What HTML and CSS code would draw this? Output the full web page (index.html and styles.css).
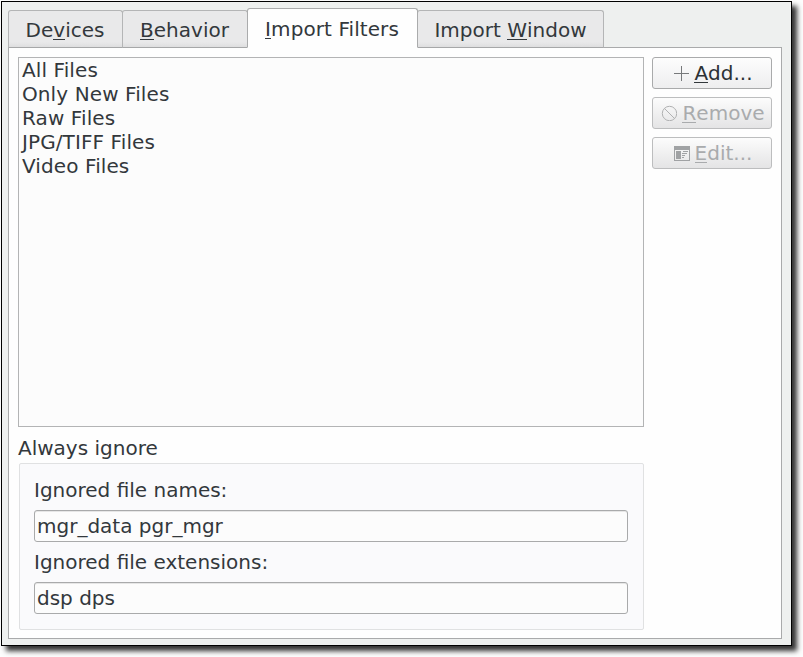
FILE: index.html
```html
<!DOCTYPE html>
<html lang="en">
<head>
<meta charset="utf-8">
<title>Import Filters</title>
<link rel="stylesheet" href="styles.css">
</head>
<body>
<main class="window">
  <nav class="tabs">
    <div class="tab tab-devices"><span>De<u>v</u>ices</span></div>
    <div class="tab tab-behavior"><span><u>B</u>ehavior</span></div>
    <div class="tab tab-active"><span><u>I</u>mport Filters</span></div>
    <div class="tab tab-window"><span>Import <u>W</u>indow</span></div>
  </nav>
  <section class="panel">
    <div class="main">
      <ul class="list">
        <li>All Files</li>
        <li>Only New Files</li>
        <li>Raw Files</li>
        <li>JPG/TIFF Files</li>
        <li>Video Files</li>
      </ul>
      <h2 class="title">Always ignore</h2>
      <div class="group">
        <label for="names">Ignored file names:</label>
        <input id="names" type="text" value="mgr_data pgr_mgr">
        <label for="extensions">Ignored file extensions:</label>
        <input id="extensions" type="text" value="dsp dps">
      </div>
    </div>
    <div class="actions">
      <button class="button">
        <svg width="16" height="16" viewBox="0 0 16 16"><path d="M8.500 1v15M1 8.500h15" fill="none" stroke="#77797b" stroke-width="1"/></svg>
        <span><u>A</u>dd...</span>
      </button>
      <button class="button" disabled>
        <svg width="16" height="16" viewBox="0 0 16 16"><g fill="none" stroke="#b0b1b2" stroke-width="1"><circle cx="8.500" cy="8.500" r="7.200"/><path d="M3.400 3.400l10.200 10.200"/></g></svg>
        <span><u>R</u>emove</span>
      </button>
      <button class="button" disabled>
        <svg width="16" height="16" viewBox="0 0 16 16"><g fill="#a0a2a4"><path fill-rule="evenodd" d="M0 1h16v15H0zM1 5v10h14V5z"/><path d="M2 6h5v8H2zM9 6h5v1H9zM8 8h5v1H8zM8 10h3v1H8zM8 12h2v1H8z"/></g></svg>
        <span><u>E</u>dit...</span>
      </button>
    </div>
  </section>
</main>
</body>
</html>
```

FILE: styles.css
```css
* { box-sizing: border-box; }

body {
  margin: 0;
  padding: 1px;
  height: 657px;
  overflow: hidden;
  background: #fdfdfd;
  color: #33383c;
  font: 20px/24px "DejaVu Sans", sans-serif;
}

u {
  text-decoration: none;
  box-shadow: 0 -1px 0 #33383c inset;
  display: inline-block;
  height: 22px;
  line-height: 24px;
  vertical-align: top;
}

.window {
  width: 791px;
  height: 645px;
  border: 1px solid #000;
  padding: 6px 9px 6px 6px;
  background: #eef0ef;
  box-shadow: 5px 5px 5px rgba(0, 0, 0, 0.8);
}

.tabs {
  display: flex;
  align-items: flex-end;
  height: 40px;
}

.tab {
  display: flex;
  justify-content: center;
  height: 38px;
  padding: 7px 1px 0 0;
  border: 1px solid #b4b5b6;
  border-bottom-color: #a6a7a8;
  border-radius: 3px 3px 0 0;
  background: linear-gradient(#e9e9ea 86%, #dededf);
}

.tab-devices { width: 115px; }
.tab-behavior { width: 126px; margin-left: -1px; }
.tab-window { width: 187px; margin-left: -1px; padding-right: 0; }

.tab-active {
  width: 171px;
  height: 40px;
  margin-left: -1px;
  padding-top: 8px;
  position: relative;
  border-color: #aaabac;
  border-bottom-color: #fefefe;
  background: #fefefe;
  letter-spacing: 0.08px;
}

.panel {
  display: flex;
  gap: 8px;
  width: 774px;
  height: 592px;
  margin-top: -1px;
  padding: 9px;
  border: 1px solid #a9aaab;
  background: #fefefe;
}

.main { width: 626px; }

.list {
  height: 370px;
  margin: 0;
  padding: 0 3px;
  border: 1px solid #b3b4b5;
  background: #fcfcfc;
  list-style: none;
  letter-spacing: 0.1px;
}

.title {
  margin: 9px 0 3px;
  font: inherit;
}

.group {
  display: flex;
  flex-direction: column;
  height: 167px;
  margin-left: 1px;
  padding: 14px 15px 14px 14px;
  border: 1px solid #e0e1e2;
  border-radius: 2px;
  background: #fafafc;
}

.group label {
  flex: none;
  height: 32px;
}

.group input {
  flex: none;
  width: 594px;
  height: 32px;
  margin: 0 0 8px;
  padding: 0 2px;
  border: 1px solid #a9aaab;
  border-radius: 3px;
  background: #fcfcfc;
  box-shadow: inset 0 1px #e6e6e6;
  color: inherit;
  font: inherit;
}

.actions {
  display: flex;
  flex-direction: column;
  gap: 8px;
}

.button {
  display: flex;
  align-items: center;
  justify-content: center;
  gap: 5px;
  width: 120px;
  height: 32px;
  padding: 0 0 0 2px;
  border: 1px solid #a9aaab;
  border-radius: 3px;
  background: linear-gradient(#fdfdfd, #eeeeef);
  color: #2c3135;
  font: inherit;
}

.button:disabled {
  border-color: #bcbdbe;
  background: linear-gradient(#fcfcfc, #e4e4e5);
  color: #a9abad;
}

.button:disabled u { box-shadow: 0 -1px 0 #a9abad inset; }
```
